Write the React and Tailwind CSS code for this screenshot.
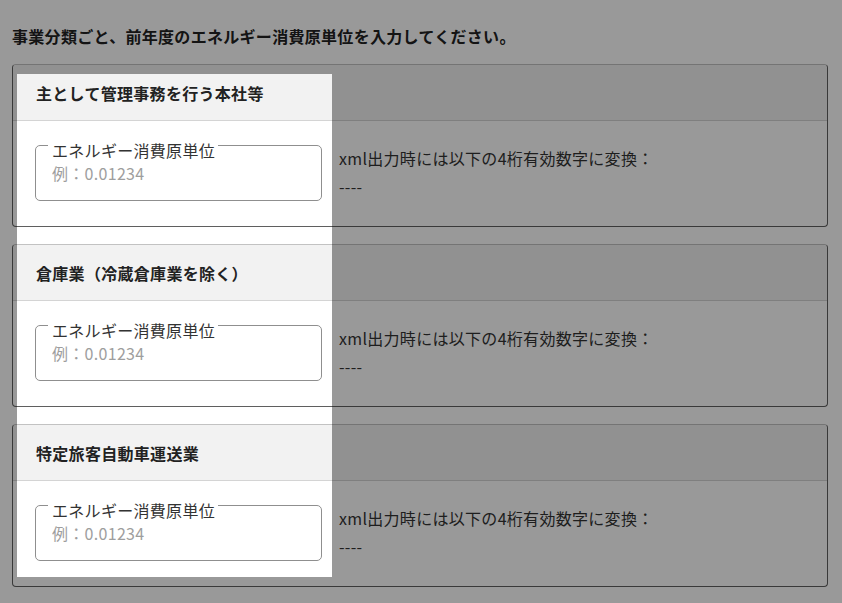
import React from 'react';

const CATEGORIES = [
  '主として管理事務を行う本社等',
  '倉庫業（冷蔵倉庫業を除く）',
  '特定旅客自動車運送業',
];

function UnitInput() {
  return (
    <div className="relative flex h-[56px] w-[287px] shrink-0 flex-col rounded-[5px] border border-[#8f8f8f]">
      {/* Floating label over the border */}
      <span className="absolute left-[12px] top-[-6px] bg-white pl-[4px] pr-[3px] text-base leading-[20px] text-[#333]">
        エネルギー消費原単位
      </span>
      <input
        type="text"
        placeholder="例：0.01234"
        className="mt-[15px] h-6 w-full bg-transparent px-4 text-base tracking-[0.3px] text-[#333] placeholder:text-[#9e9e9e] focus:outline-none"
      />
    </div>
  );
}

function CategoryCard({ title }) {
  return (
    <div className="rounded-[4px] border border-[#5f5f5f] border-t-[#c2c2c2]">
      <div className="flex h-[56px] items-center rounded-t-[4px] border-b border-[#d4d4d4] bg-[#f2f2f2] pl-[23px] text-base font-bold text-[#222]">
        {title}
      </div>
      <div className="flex items-center gap-[17px] px-[22px] pt-6 pb-[25px]">
        <UnitInput />
        <div className="-mt-[2px] text-base leading-[28px] text-[#333]">
          <div>xml出力時には以下の4桁有効数字に変換：</div>
          <div>----</div>
        </div>
      </div>
    </div>
  );
}

export default function App() {
  return (
    <div className="relative min-h-[603px] overflow-hidden bg-white pl-3 pr-[14px] font-['Noto_Sans_CJK_JP','Noto_Sans',sans-serif] tracking-[0.3px]">
      <p className="pt-[24px] text-base font-bold leading-6 text-[#222]">
        事業分類ごと、前年度のエネルギー消費原単位を入力してください。
      </p>

      <div className="mt-[16px] flex flex-col gap-[17px]">
        {CATEGORIES.map(title => (
          <CategoryCard key={title} title={title} />
        ))}
      </div>

      {/* Tour spotlight */}
      <div className="pointer-events-none absolute left-[17px] top-[74px] h-[503px] w-[315px] shadow-[0_0_0_2000px_rgba(0,0,0,0.4)]" />
    </div>
  );
}
